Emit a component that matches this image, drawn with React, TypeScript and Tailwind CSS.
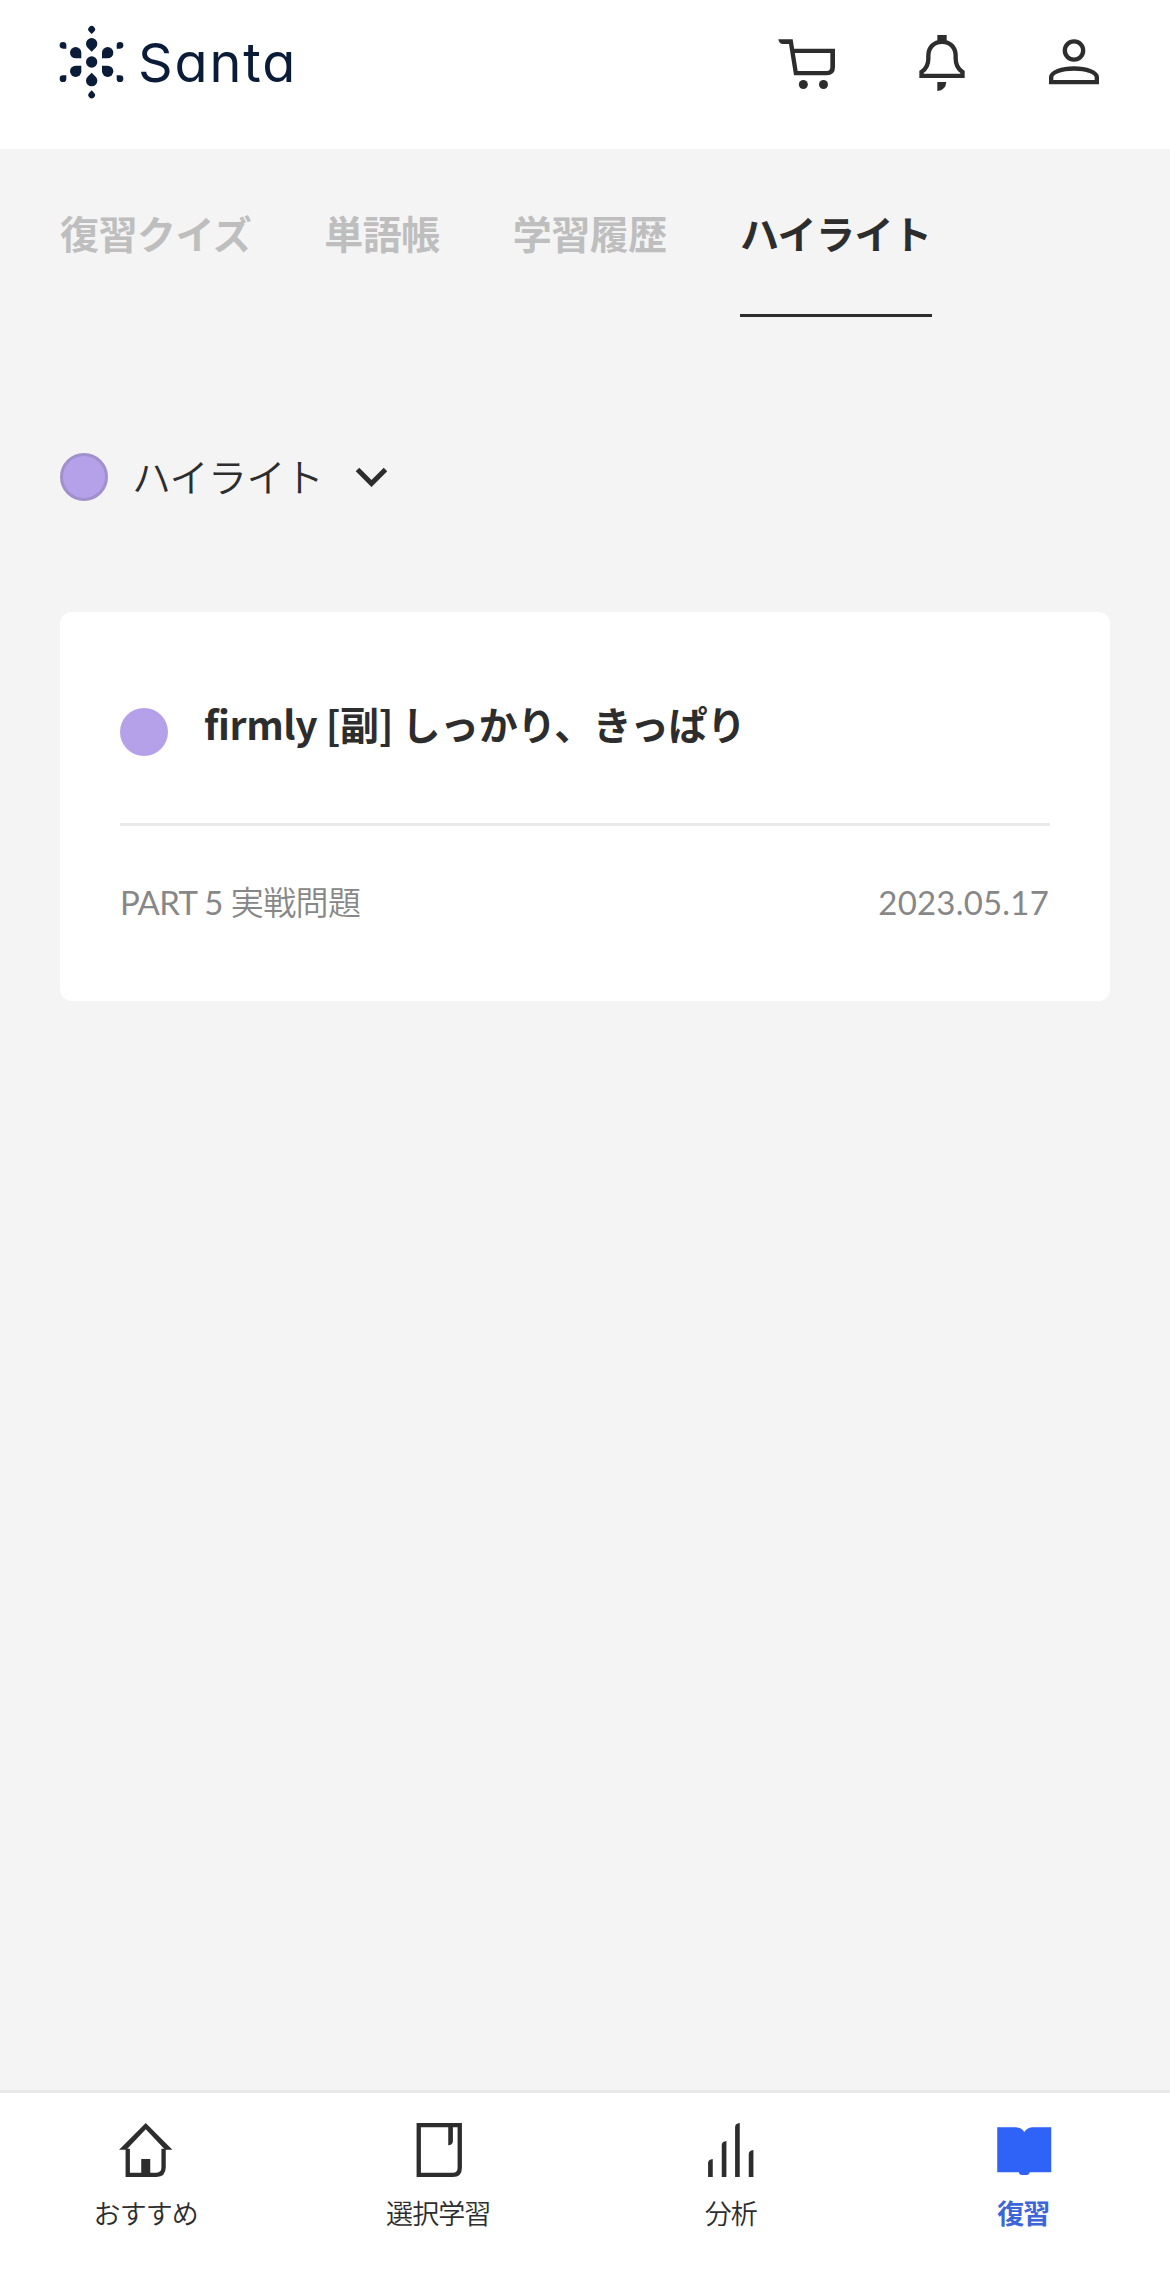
import type { ReactNode } from "react";

const INNER = [
  [155, 100, 45],
  [107, 127, 0],
  [203, 127, 90],
  [107, 183, 270],
  [203, 183, 180],
  [155, 211, 225],
];
const OUTER = [
  [155, 57, 45],
  [69, 105, 0],
  [240, 105, 90],
  [69, 205, 270],
  [240, 205, 180],
  [155, 254, 225],
];

function Logo() {
  return (
    <div className="flex items-start text-[#0b1c38]">
      <svg className="h-[74px] w-[66px]" viewBox="57 44 198 222" fill="currentColor">
        <circle cx="155" cy="155" r="17" />
        {INNER.map(([x, y, r]) => (
          <path key={`${x}-${y}`} d="M17 17H0A17 17 0 1 1 17 0Z" transform={`translate(${x} ${y}) rotate(${r})`} />
        ))}
        {OUTER.map(([x, y, r]) => (
          <path key={`${x}-${y}`} d="M10 10H0A10 10 0 1 1 10 0Z" transform={`translate(${x} ${y}) rotate(${r})`} />
        ))}
      </svg>
      <span className="ml-[13px] pt-[1px] font-[Inter,sans-serif] text-[54px] leading-[74px] tracking-[1.9px] [font-feature-settings:'cv11']">
        Santa
      </span>
    </div>
  );
}

function Icon({ box, children }: { box: string; children: ReactNode }) {
  return (
    <svg className="size-[72px]" viewBox={box} fill="none" stroke="currentColor" strokeWidth="13">
      {children}
    </svg>
  );
}

const TABS = ["復習クイズ", "単語帳", "学習履歴", "ハイライト"];

const NAV = [
  {
    label: "おすすめ",
    icon: (
      <Icon box="150.75 102 216 216">
        <path d="M204 206V284.500H290Q311.500 284.500 311.500 262V206" />
        <path d="M178 209.500L258 129L338 209.500H316L258 148L200 209.500Z" fill="currentColor" stroke="none" />
        <path d="M258 237V284" strokeWidth="27" />
      </Icon>
    ),
  },
  {
    label: "選択学習",
    icon: (
      <Icon box="1028.25 102 216 216">
        <path d="M1075.500 135.500H1198.500V263Q1198.500 284.500 1178 284.500H1075.500Z" />
        <path d="M1164 140H1178V182Q1178 195 1164 196Z" fill="currentColor" stroke="none" />
      </Icon>
    ),
  },
  {
    label: "分析",
    icon: (
      <Icon box="105.75 102 216 216">
        <g fill="currentColor" stroke="none">
          <path d="M145 291V250Q145 238 159 237V291Z" />
          <path d="M186 291V196Q186 184 200 183V291Z" />
          <path d="M226 291V142Q226 130 240 129V291Z" />
          <path d="M267 291V223Q267 211 281 210V291Z" />
        </g>
      </Icon>
    ),
  },
  {
    label: "復習",
    active: true,
    icon: (
      <Icon box="983.25 102 216 216">
        <path
          d="M1011 142H1065Q1083 142 1092 156Q1101 142 1119 142H1173V277H1108Q1107 285 1099 285H1085Q1077 285 1076 277H1011Z"
          fill="#2f62f6"
          stroke="none"
        />
      </Icon>
    ),
  },
];

export default function App() {
  return (
    <div
      className="flex h-[2277px] w-[1170px] flex-col bg-[#f4f4f4] font-[Lato,'Noto_Sans_CJK_JP',sans-serif] tracking-[-0.6px] text-[#2d2d2d]"
      lang="ja"
    >
      <header className="flex h-[149px] items-start justify-between bg-white pr-[60px] pl-[59px]">
        <div className="pt-[25px]">
          <Logo />
        </div>
        <div className="flex gap-[60px] pt-[26px]">
          <Icon box="42 18 216 216">
            <path
              d="M55 58H98L113 153H200Q211 153 211 142V99H102V86H225V142Q225 166 200 166H102L87 72H69Q57 72 55 58Z"
              fill="currentColor"
              stroke="none"
            />
            <circle cx="130" cy="193.500" r="13.500" fill="currentColor" stroke="none" />
            <circle cx="190.500" cy="193.500" r="13.500" fill="currentColor" stroke="none" />
          </Icon>
          <Icon box="438 18 216 216">
            <path d="M546 45V68" strokeWidth="28" />
            <path d="M484.500 167.500V156Q505 142 505 116V107C505 82 522 65.500 546 65.500S587 82 587 107V116Q587 142 607.500 156V167.500Z" />
            <path d="M532 186H559Q557 211 532 213Z" fill="currentColor" stroke="none" />
          </Icon>
          <Icon box="834 18 216 216">
            <circle cx="942" cy="91.500" r="27.500" />
            <path d="M873.500 186.500V172C873.500 157 905 145.500 942 145.500S1010.500 157 1010.500 172V186.500Z" />
          </Icon>
        </div>
      </header>

      <main className="flex-1 pr-[60px] pl-[60px]">
        <nav className="flex gap-[73px] text-[39px] font-bold leading-[60px] tracking-[-0.5px]">
          {TABS.map((tab, i) => (
            <div
              key={tab}
              className={
                i === 3
                  ? "h-[168px] border-b-[3px] border-[#2d2d2d] pt-[55px]"
                  : "h-[168px] pt-[55px] text-[#bebebe]"
              }
            >
              {tab}
            </div>
          ))}
        </nav>

        <div className="mt-[136px] flex h-[48px] items-center">
          <span className="size-[48px] rounded-full border-[3px] border-[#a190cc] bg-[#b5a1e9]" />
          <span className="ml-[24px] text-[39px] font-[350] leading-[48px]">ハイライト</span>
          <svg className="ml-[32px] h-[20px] w-[32px]" viewBox="0 0 32 20" fill="none" stroke="currentColor" strokeWidth="5">
            <path d="M2.500 2.500L16.500 16.500L30.500 2.500" />
          </svg>
        </div>

        <section className="mt-[111px] h-[389px] rounded-[12px] bg-white px-[60px]">
          <div className="flex h-[214px] items-start border-b-[3px] border-[#e9e9e9] pt-[81px]">
            <span className="mt-[15px] size-[48px] rounded-full bg-[#b5a1e9]" />
            <h2 className="ml-[36px] font-['Noto_Sans_CJK_JP',sans-serif] text-[39px] font-bold leading-[60px] tracking-[-0.4px]">
              firmly [副] しっかり、きっぱり
            </h2>
          </div>
          <div className="flex justify-between pt-[51px] text-[33px] leading-[51px] text-[#878787]">
            <span>
              PART 5 <span className="font-[350]">実戦問題</span>
            </span>
            <span className="mr-[1px] tracking-[0.2px]">2023.05.17</span>
          </div>
        </section>
      </main>

      <footer className="grid h-[187px] grid-cols-4 border-t-[3px] border-[#e8e8e8] bg-white pt-[21px] tracking-[-0.9px]">
        {NAV.map(({ label, icon, active }) => (
          <div key={label} className="flex flex-col items-center">
            {icon}
            <span
              className={
                active
                  ? "mt-[8px] mr-[1px] text-[27px] font-bold leading-[39px] text-[#3c66d8]"
                  : "mt-[8px] mr-[1px] text-[27px] font-[350] leading-[39px]"
              }
            >
              {label}
            </span>
          </div>
        ))}
      </footer>
    </div>
  );
}
